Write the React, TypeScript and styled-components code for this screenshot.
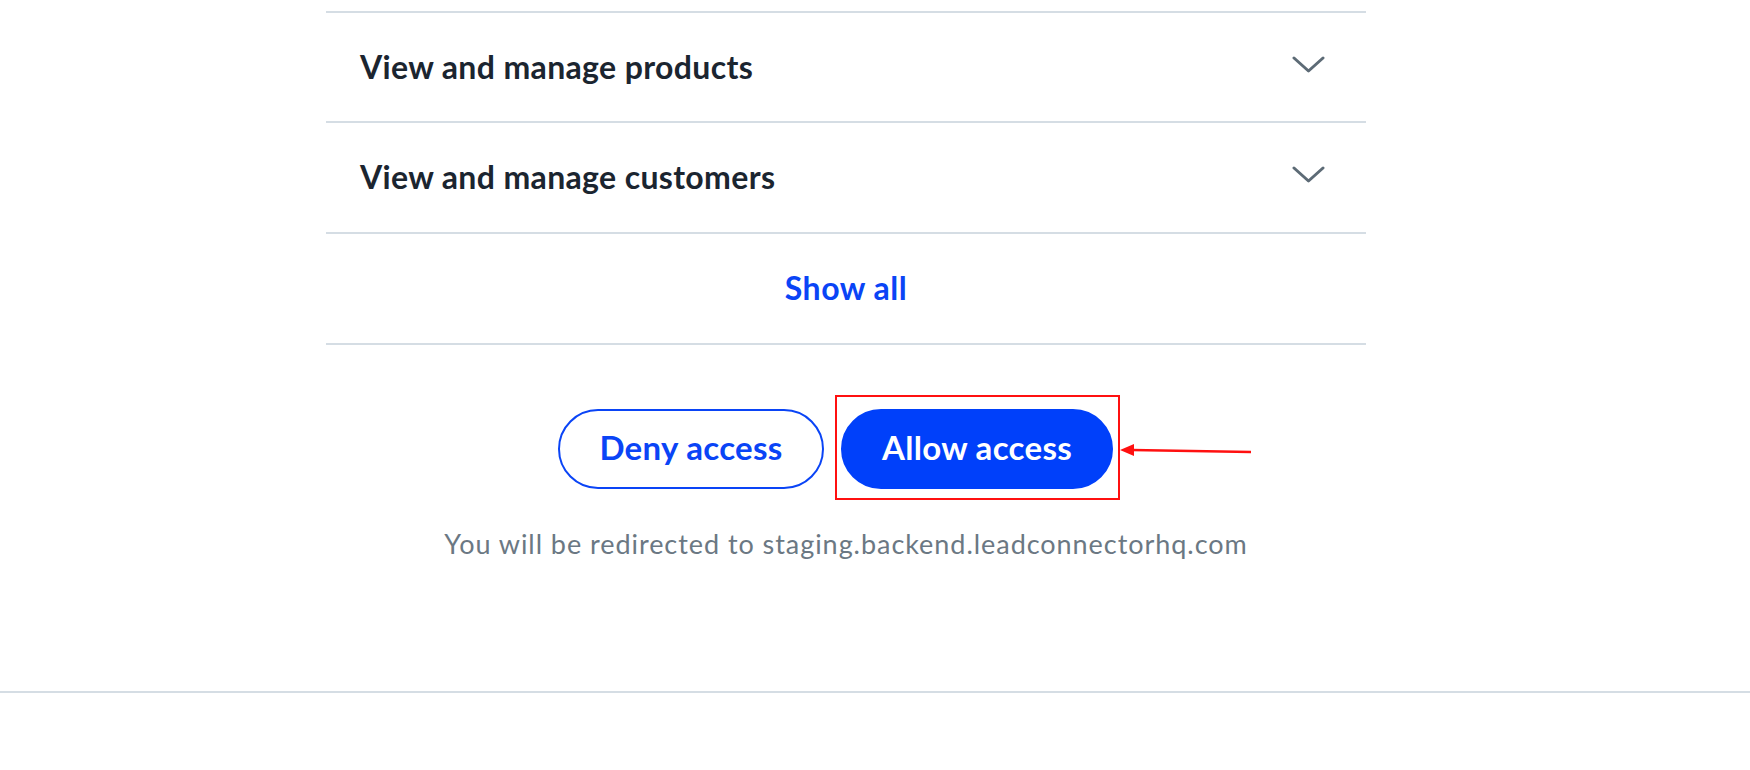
import React from "react";
import styled, { createGlobalStyle } from "styled-components";

const Global = createGlobalStyle`
  html, body { margin: 0; padding: 0; background: #ffffff; }
  body { font-family: Lato, "Open Sans", Arial, sans-serif; }
`;

const Page = styled.div`
  width: 1750px;
  height: 770px;
  overflow: hidden;
  display: flex;
  flex-direction: column;
`;

const Panel = styled.section`
  width: 1040px;
  margin-left: 326px;
  padding-top: 11px;
  display: flex;
  flex-direction: column;
`;

const Row = styled.div<{ $h: number }>`
  height: ${(p) => p.$h}px;
  border-top: 2px solid #d5dde4;
  display: flex;
  align-items: center;
  justify-content: space-between;
  padding: 0 41px 0 34px;
`;

const RowTitle = styled.h3`
  margin: 0 0 2px;
  font-size: 32px;
  font-weight: 700;
  color: #1b2530;
  letter-spacing: 0.35px;
`;

const ShowAllRow = styled.div`
  height: 109px;
  border-top: 2px solid #d5dde4;
  border-bottom: 2px solid #d5dde4;
  display: flex;
  align-items: center;
  justify-content: center;
`;

const LinkButton = styled.button`
  background: none;
  border: none;
  padding: 0 0 3px;
  font-family: inherit;
  font-size: 32px;
  font-weight: 700;
  letter-spacing: 0.5px;
  color: #0a44f6;
  cursor: pointer;
`;

const Actions = styled.div`
  margin-top: 64px;
  display: flex;
  justify-content: center;
  gap: 17px;
  padding-right: 21px;
`;

const PillButton = styled.button<{ $primary?: boolean; $w: number }>`
  width: ${(p) => p.$w}px;
  height: 80px;
  padding: 0 0 4px;
  border-radius: 40px;
  font-family: inherit;
  font-size: 33px;
  font-weight: 700;
  letter-spacing: 0.3px;
  box-sizing: border-box;
  cursor: pointer;
  border: 2px solid #0a44f6;
  background: ${(p) => (p.$primary ? "#0040fa" : "#ffffff")};
  color: ${(p) => (p.$primary ? "#ffffff" : "#0a44f6")};
  border-color: ${(p) => (p.$primary ? "#0040fa" : "#0a44f6")};
`;

const Highlight = styled.div`
  position: relative;
  display: flex;
  &::before {
    content: "";
    position: absolute;
    left: -6px;
    right: -7px;
    top: -14px;
    bottom: -11px;
    border: 2.5px solid #ff1010;
    pointer-events: none;
  }
`;

const Arrow = styled.svg`
  position: absolute;
  left: calc(100% + 7px);
  top: 30px;
  overflow: visible;
`;

const ChevronIcon = styled.svg`
  margin-bottom: 5px;
  flex: none;
`;

const Note = styled.p`
  margin: 40px 0 0;
  text-align: center;
  font-size: 27px;
  line-height: 30px;
  color: #6b7883;
  letter-spacing: 0.95px;
`;

const Footer = styled.div`
  margin-top: 132px;
  border-top: 2px solid #d5dde4;
`;

const Chevron = () => (
  <ChevronIcon width="33" height="18" viewBox="0 0 33 18" fill="none">
    <path d="M2 2 L16.5 15 L31 2" stroke="#5d6b76" strokeWidth="3" strokeLinecap="round" strokeLinejoin="round" />
  </ChevronIcon>
);

export default function App() {
  return (
    <>
      <Global />
      <Page>
        <Panel>
          <Row $h={108}>
            <RowTitle>View and manage products</RowTitle>
            <Chevron />
          </Row>
          <Row $h={109}>
            <RowTitle>View and manage customers</RowTitle>
            <Chevron />
          </Row>
          <ShowAllRow>
            <LinkButton>Show all</LinkButton>
          </ShowAllRow>
          <Actions>
            <PillButton $w={266}>Deny access</PillButton>
            <Highlight>
              <PillButton $primary $w={272}>Allow access</PillButton>
              <Arrow width="132" height="20" viewBox="0 0 132 20">
                <line x1="12" y1="11" x2="131" y2="13" stroke="#ff1010" strokeWidth="2.5" />
                <polygon points="0,11 14,5 14,17" fill="#ff1010" />
              </Arrow>
            </Highlight>
          </Actions>
          <Note>You will be redirected to staging.backend.leadconnectorhq.com</Note>
        </Panel>
        <Footer />
      </Page>
    </>
  );
}
